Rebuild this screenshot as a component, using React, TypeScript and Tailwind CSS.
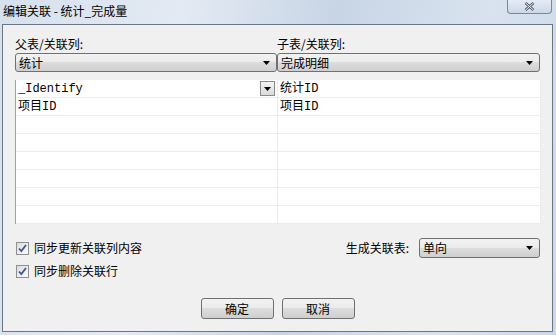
import type { ReactNode } from "react";

const ui = { fontFamily: '"Noto Sans CJK SC", "Noto Sans", sans-serif' };
const cell = { fontFamily: '"Liberation Mono", "Noto Sans CJK SC", monospace' };

function Arrow() {
  return (
    <svg width="7" height="4" viewBox="0 0 7 4">
      <path d="M0 0h7L3.5 4z" fill="#000" />
    </svg>
  );
}

function Combo({ text, className }: { text: string; className: string }) {
  return (
    <div
      className={`flex items-center justify-between border border-[#707070] rounded-[3px] bg-[linear-gradient(#f2f2f2_0%,#ebebeb_50%,#dddddd_50%,#cfcfcf_100%)] pl-[3px] pr-[6px] text-[12px] text-black ${className}`}
    >
      <span className="leading-none">{text}</span>
      <Arrow />
    </div>
  );
}

function Check({ label }: { label: string }) {
  return (
    <div className="flex items-center gap-[5px] text-[12px] text-black">
      <div className="w-[13px] h-[13px] border border-[#8e8f8f] bg-[linear-gradient(135deg,#dcdcdc,#fcfcfc)] flex items-center justify-center">
        <svg width="9" height="9" viewBox="0 0 9 9">
          <path d="M1 4.5l2.3 2.5L8 1" stroke="#3d5596" strokeWidth="1.8" fill="none" />
        </svg>
      </div>
      <span>{label}</span>
    </div>
  );
}

function Btn({ children }: { children: ReactNode }) {
  return (
    <button className="w-[73px] h-[21px] border border-[#707070] rounded-[3px] bg-[linear-gradient(#f2f2f2_0%,#ebebeb_50%,#dddddd_50%,#cfcfcf_100%)] text-[12px] text-black leading-none">
      {children}
    </button>
  );
}

const rows = [
  ["_Identify", "统计ID"],
  ["项目ID", "项目ID"],
  ["", ""],
  ["", ""],
  ["", ""],
  ["", ""],
  ["", ""],
  ["", ""],
];

export default function App() {
  return (
    <div
      className="w-[556px] h-[335px] flex flex-col bg-[linear-gradient(100deg,#d6e1ee_0%,#e3eaf3_30%,#c8d5e5_55%,#d9e3ef_80%,#cbd8e8_100%)] overflow-hidden"
      style={ui}
    >
      {/* title bar */}
      <div className="h-[24px] flex items-start justify-between pl-[3px] shrink-0">
        <span className="text-[12px] text-black mt-[3px] leading-[16px]">编辑关联 - 统计_完成量</span>
        <div className="w-[45px] h-[15px] mr-[4px] -mt-[1px] border border-[#7a889b] border-t-0 rounded-b-[4px] bg-[linear-gradient(#e6edf5,#cdd8e6)] flex items-center justify-center">
          <svg width="11" height="9" viewBox="0 0 11 9">
            <path d="M1.5 1l8 7M9.5 1l-8 7" stroke="#4a5566" strokeWidth="2.4" />
            <path d="M1.5 1l8 7M9.5 1l-8 7" stroke="#f4f6f9" strokeWidth="1" />
          </svg>
        </div>
      </div>

      {/* client area */}
      <div className="ml-[2px] w-[551px] h-[308px] border border-[#6b7685] bg-[#f0f0f0] pl-[12px] flex flex-col">
        <div className="flex mt-[11px] h-[16px] text-[12px] text-black leading-[16px]">
          <span className="w-[262px]">父表/关联列:</span>
          <span>子表/关联列:</span>
        </div>
        <div className="flex mt-[1px]">
          <Combo text="统计" className="w-[262px] h-[19px]" />
          <Combo text="完成明细" className="w-[263px] h-[19px]" />
        </div>

        {/* grid */}
        <div className="mt-[8px] w-[525px] bg-white border-l border-[#a0a0a0] grid grid-cols-[262px_263px]">
          {rows.map((r, i) => (
            <div key={i} className="contents">
              <div className="h-[18px] border-b border-r border-[#ececec] flex items-center justify-between pl-[2px] pr-[2px] text-[12px] text-black" style={cell}>
                <span>{r[0]}</span>
                {i === 0 && (
                  <div className="w-[15px] h-[15px] border border-[#8a8a8a] bg-[linear-gradient(#f4f4f4,#dadada)] flex items-center justify-center">
                    <Arrow />
                  </div>
                )}
              </div>
              <div className="h-[18px] border-b border-r border-[#ececec] flex items-center pl-[2px] text-[12px] text-black" style={cell}>
                {r[1]}
              </div>
            </div>
          ))}
        </div>

        {/* options */}
        <div className="flex items-center justify-between w-[525px] mt-[14px] pl-[1px]">
          <Check label="同步更新关联列内容" />
          <div className="flex items-center gap-[10px]">
            <span className="text-[12px] text-black">生成关联表:</span>
            <Combo text="单向" className="w-[121px] h-[20px]" />
          </div>
        </div>
        <div className="mt-[4px] pl-[1px]">
          <Check label="同步删除关联行" />
        </div>

        <div className="flex justify-center gap-[8px] mt-[18px] pr-[12px]">
          <Btn>确定</Btn>
          <Btn>取消</Btn>
        </div>
      </div>
    </div>
  );
}
